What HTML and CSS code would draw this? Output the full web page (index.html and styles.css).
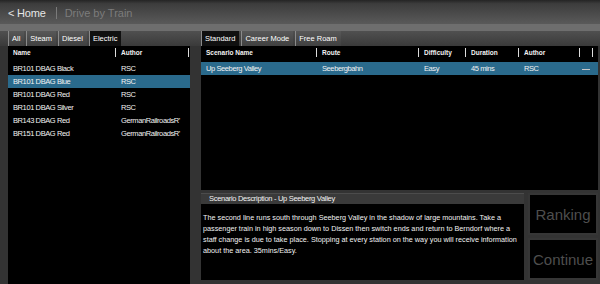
FILE: index.html
```html
<!DOCTYPE html>
<html lang="en">

<head>
    <meta charset="UTF-8">
    <title>Drive by Train</title>
    <link rel="stylesheet" href="styles.css">
</head>

<body>
    <header class="topbar">
        <span class="home">&lt; Home</span>
        <span class="divider"></span>
        <span class="title">Drive by Train</span>
    </header>
    <div class="band"></div>

    <main class="content">
        <section class="browser">
            <nav class="tabs">
                <span class="tab">All</span>
                <span class="tab">Steam</span>
                <span class="tab">Diesel</span>
                <span class="tab active">Electric</span>
            </nav>
            <div class="panel list">
                <div class="head"><span>Name</span><span>Author</span><span></span></div>
                <div class="row"><span>BR101 DBAG Black</span><span>RSC</span></div>
                <div class="row selected"><span>BR101 DBAG Blue</span><span>RSC</span></div>
                <div class="row"><span>BR101 DBAG Red</span><span>RSC</span></div>
                <div class="row"><span>BR101 DBAG Silver</span><span>RSC</span></div>
                <div class="row"><span>BR143 DBAG Red</span><span>GermanRailroadsR'</span></div>
                <div class="row"><span>BR151 DBAG Red</span><span>GermanRailroadsR'</span></div>
            </div>
        </section>

        <section class="scenarios">
            <nav class="tabs">
                <span class="tab active">Standard</span>
                <span class="tab">Career Mode</span>
                <span class="tab">Free Roam</span>
            </nav>
            <div class="panel table">
                <div class="head">
                    <span>Scenario Name</span><span>Route</span><span>Difficulty</span><span>Duration</span><span>Author</span><span></span><span></span>
                </div>
                <div class="row selected">
                    <span>Up Seeberg Valley</span><span>Seebergbahn</span><span>Easy</span><span>45 mins</span><span>RSC</span><span><i class="grip"></i></span>
                </div>
            </div>

            <div class="bottom">
                <div class="description">
                    <div class="desc-title">Scenario Description - Up Seeberg Valley</div>
                    <p>The second line runs south through Seeberg Valley in the shadow of large mountains. Take a<br>
                        passenger train in high season down to Dissen then switch ends and return to Berndorf where a<br>
                        staff change is due to take place. Stopping at every station on the way you will receive information<br>
                        about the area. 35mins/Easy.</p>
                </div>
                <div class="actions">
                    <button>Ranking</button>
                    <button>Continue</button>
                </div>
            </div>
        </section>
    </main>
</body>

</html>
```

FILE: styles.css
```css
body {
    margin: 0;
    width: 600px;
    height: 284px;
    overflow: hidden;
    display: flex;
    flex-direction: column;
    background: #333;
    color: #f2f2f2;
    font-family: "Liberation Sans", Arial, sans-serif;
}

.topbar {
    height: 22px;
    padding: 2px 0 0 8px;
    display: flex;
    align-items: center;
    background: linear-gradient(#242424, #3c3c3c 15%, #5a5a5a);
}

.home {
    font-size: 11px;
    color: #e6e6e6;
    letter-spacing: -0.2px;
}

.divider {
    width: 1px;
    height: 12px;
    margin: 0 8px 0 10px;
    background: #7a7a7a;
}

.title {
    font-size: 11px;
    color: #7c7c7c;
}

.band {
    height: 7px;
    background: #6e6e6e;
}

.content {
    flex: 1;
    min-height: 0;
    display: flex;
    gap: 11px;
    padding: 0 5px 0 8px;
    background: linear-gradient(#505050, #3a3a3a 15px, #333 15px);
}

.browser {
    width: 182px;
    display: flex;
    flex-direction: column;
}

.scenarios {
    flex: 1;
    display: flex;
    flex-direction: column;
    padding-bottom: 4px;
}

/* tabs */
.tabs {
    display: flex;
    gap: 2px;
    height: 15px;
}

.tab {
    padding: 1px 4px 0 3px;
    font-size: 7.5px;
    line-height: 14px;
    color: #fff;
    background: linear-gradient(#585858, #404040);
    border-left: 1px solid #8a8a8a;
}

.tab.active {
    background: #101010;
}

/* list + table panels */
.panel {
    background: #000;
}

.list {
    flex: 1;
}

.table {
    height: 144px;
}

.head {
    display: grid;
    padding: 2px 0;
    margin-bottom: 3px;
    font-size: 6.5px;
    font-weight: bold;
    line-height: 9px;
}

.list .head,
.list .row {
    grid-template-columns: 107px 73px 1fr;
}

.table .head,
.table .row {
    grid-template-columns: 115px 102px 47px 53px 61px 13px 1fr;
}

.head span {
    padding-left: 5px;
    white-space: nowrap;
}

.head span+span {
    border-left: 1px solid #ddd;
}

.row {
    display: grid;
    height: 13px;
    line-height: 13px;
    font-size: 7.5px;
    letter-spacing: -0.4px;
}

.row span {
    padding-left: 5px;
    white-space: nowrap;
    overflow: hidden;
}

.row span+span {
    padding-left: 6px;
}

.row.selected {
    background: #2a6a8c;
}

.grip {
    display: inline-block;
    width: 8px;
    height: 1px;
    margin-left: -3px;
    vertical-align: middle;
    background: #c8c8c8;
}

/* description + buttons */
.bottom {
    display: flex;
    gap: 4px;
    height: 87px;
    margin-top: 3px;
}

.description {
    flex: 1;
    background: #000;
}

.desc-title {
    height: 10px;
    line-height: 10px;
    padding-left: 8px;
    font-size: 7.5px;
    letter-spacing: -0.3px;
    background: #3a3a3a;
    border-top: 1px solid #4c4c4c;
}

.description p {
    margin: 0;
    padding: 8px 2px 0;
    font-size: 7.25px;
    line-height: 11px;
    white-space: nowrap;
}

.actions {
    width: 70px;
    display: flex;
    flex-direction: column;
    gap: 3px;
}

.actions button {
    flex: 1;
    padding: 0;
    background: #000;
    border: 2px solid #363636;
    color: #4e4e4e;
    font: 15px "Liberation Sans", Arial, sans-serif;
}
```
